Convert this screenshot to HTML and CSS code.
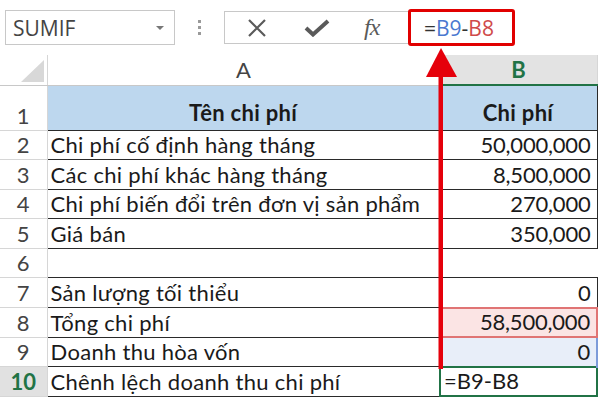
FILE: index.html
```html
<!DOCTYPE html>
<html lang="vi">
<head>
    <meta charset="UTF-8">
    <title>SUMIF - Chênh lệch doanh thu chi phí</title>
    <link rel="stylesheet" href="styles.css">
</head>
<body>

    <div class="formula-bar">
        <div class="name-box">
            <span>SUMIF</span>
            <span class="caret"></span>
        </div>
        <div class="grip"><i></i><i></i><i></i></div>
        <div class="formula-tools">
            <svg class="icon-cancel" width="22" height="20" viewBox="0 0 22 20">
                <path d="M3 2 L19 18 M19 2 L3 18" stroke="#5a5a5a" stroke-width="2.2" fill="none"/>
            </svg>
            <svg class="icon-enter" width="26" height="18" viewBox="0 0 26 18">
                <path d="M2 9 L9 15.5 L24 2" stroke="#5a5a5a" stroke-width="4" fill="none" stroke-linejoin="miter"/>
            </svg>
            <span class="fx">fx</span>
        </div>
        <div class="formula-input">
            <span>=</span><span class="ref-blue">B9</span><span>-</span><span class="ref-red">B8</span>
        </div>
    </div>

    <table class="sheet">
        <colgroup>
            <col class="col-head">
            <col class="col-a">
            <col class="col-b">
        </colgroup>
        <tr class="col-headers">
            <th class="corner"><span class="corner-tri"></span></th>
            <th>A</th>
            <th class="selected">B</th>
        </tr>
        <tr class="title-row">
            <th>1</th>
            <td class="title">Tên chi phí</td>
            <td class="title">Chi phí</td>
        </tr>
        <tr>
            <th>2</th>
            <td>Chi phí cố định hàng tháng</td>
            <td class="num">50,000,000</td>
        </tr>
        <tr>
            <th>3</th>
            <td>Các chi phí khác hàng tháng</td>
            <td class="num">8,500,000</td>
        </tr>
        <tr>
            <th>4</th>
            <td>Chi phí biến đổi trên đơn vị sản phẩm</td>
            <td class="num">270,000</td>
        </tr>
        <tr>
            <th>5</th>
            <td>Giá bán</td>
            <td class="num">350,000</td>
        </tr>
        <tr class="blank-row">
            <th>6</th>
            <td></td>
            <td class="no-border"></td>
        </tr>
        <tr>
            <th>7</th>
            <td>Sản lượng tối thiểu</td>
            <td class="num">0</td>
        </tr>
        <tr>
            <th>8</th>
            <td>Tổng chi phí</td>
            <td class="num ref-red-cell">58,500,000</td>
        </tr>
        <tr>
            <th>9</th>
            <td>Doanh thu hòa vốn</td>
            <td class="num ref-blue-cell">0</td>
        </tr>
        <tr class="active-row">
            <th>10</th>
            <td>Chênh lệch doanh thu chi phí</td>
            <td class="active-cell">=B9-B8</td>
        </tr>
    </table>

    <!-- red arrow pointing from B10 up to the formula -->
    <svg class="arrow" width="600" height="400" viewBox="0 0 600 400">
        <rect x="438.5" y="74" width="4.5" height="295" fill="#e5000b"/>
        <polygon points="441,48 426,77 457,77" fill="#e5000b"/>
    </svg>

</body>
</html>
```

FILE: styles.css
```css
body, html {
    margin: 0;
    padding: 0;
    background: #fff;
    overflow: hidden;
    font-family: 'Lato', sans-serif;
    color: #1a1a1a;
}

/* Formula bar */
.formula-bar {
    display: flex;
    align-items: center;
    height: 55px;
    padding-left: 5px;
    box-sizing: border-box;
}

.name-box {
    width: 170px;
    height: 35px;
    box-sizing: border-box;
    border: 1px solid #c8c8c8;
    display: flex;
    align-items: center;
    justify-content: space-between;
    padding: 0 10px 0 7px;
    font-family: 'Open Sans', sans-serif;
    font-size: 21px;
    color: #444;
}

.caret {
    width: 0;
    height: 0;
    border-left: 4px solid transparent;
    border-right: 4px solid transparent;
    border-top: 4px solid #777;
}

.grip {
    display: flex;
    flex-direction: column;
    gap: 3px;
    margin-left: 23px;
}

.grip i {
    display: block;
    width: 3px;
    height: 3px;
    background: #9a9a9a;
}

.formula-tools {
    margin-left: 23px;
    width: 184px;
    height: 33px;
    box-sizing: border-box;
    border: 1px solid #c8c8c8;
    border-right: none;
    display: flex;
    align-items: center;
}

.icon-cancel {
    margin-left: 21px;
}

.icon-enter {
    margin-left: 36px;
}

.fx {
    margin-left: 34px;
    font-family: 'Liberation Serif', serif;
    font-style: italic;
    font-size: 24px;
    color: #5a5a5a;
    letter-spacing: -1px;
}

.formula-input {
    width: 107px;
    height: 37px;
    box-sizing: border-box;
    border: 3px solid #e10000;
    border-radius: 3px;
    display: flex;
    align-items: center;
    padding-left: 13px;
    font-family: 'Open Sans', sans-serif;
    font-size: 21px;
    color: #333;
}

.ref-blue {
    color: #4a78d0;
}

.ref-red {
    color: #cf4a4a;
}

/* Sheet grid */
.sheet {
    border-collapse: collapse;
    table-layout: fixed;
    width: 597px;
}

.sheet tr {
    height: 29.6px;
}

.sheet tr.col-headers {
    height: 30px;
}

.sheet tr.title-row {
    height: 45px;
}

.col-head {
    width: 47px;
}

.col-a {
    width: 393px;
}

.col-b {
    width: 157px;
}

.sheet th {
    font-weight: normal;
    font-size: 22px;
    line-height: 22px;
    color: #444;
    border-bottom: 1px solid #d6d6d6;
    border-right: 1px solid #d6d6d6;
    padding: 0 0 3px 0;
    vertical-align: bottom;
}

.col-headers th {
    vertical-align: middle;
    text-align: center;
    padding: 0;
    border-bottom: 1px solid #c8c8c8;
}

.col-headers th.selected {
    background: #e3e3e3;
    color: #217346;
    font-weight: bold;
    border-bottom: 2px solid #217346;
}

.corner {
    position: relative;
}

.corner-tri {
    position: absolute;
    right: 3px;
    bottom: 3px;
    width: 0;
    height: 0;
    border-left: 23px solid transparent;
    border-bottom: 22px solid #d8d8d8;
}

.sheet td {
    font-size: 22px;
    line-height: 22px;
    letter-spacing: 0.3px;
    border: 1px solid #2a2a2a;
    padding: 0 4px 3px 3px;
    vertical-align: bottom;
    white-space: nowrap;
    overflow: hidden;
}

.sheet td.title {
    background: #bdd7ee;
    font-weight: bold;
    text-align: center;
    padding-bottom: 6px;
}

.sheet td.num {
    text-align: right;
    padding-right: 6px;
    letter-spacing: -0.2px;
}

.blank-row td.no-border {
    border-right: none;
}

.sheet td.ref-red-cell {
    background: #fbe4e4;
    border: 2px solid #e07474;
}

.sheet td.ref-blue-cell {
    background: #e8eef9;
    border-right: 2px solid #7d9bd9;
}

.active-row th {
    background: #e1e1e1;
    color: #217346;
    font-weight: bold;
}

.sheet td.active-cell {
    border: 2px solid #217346;
    letter-spacing: 0;
}

/* Arrow lies over the grid */
.arrow {
    position: absolute;
    top: 0;
    left: 0;
    pointer-events: none;
}
```
